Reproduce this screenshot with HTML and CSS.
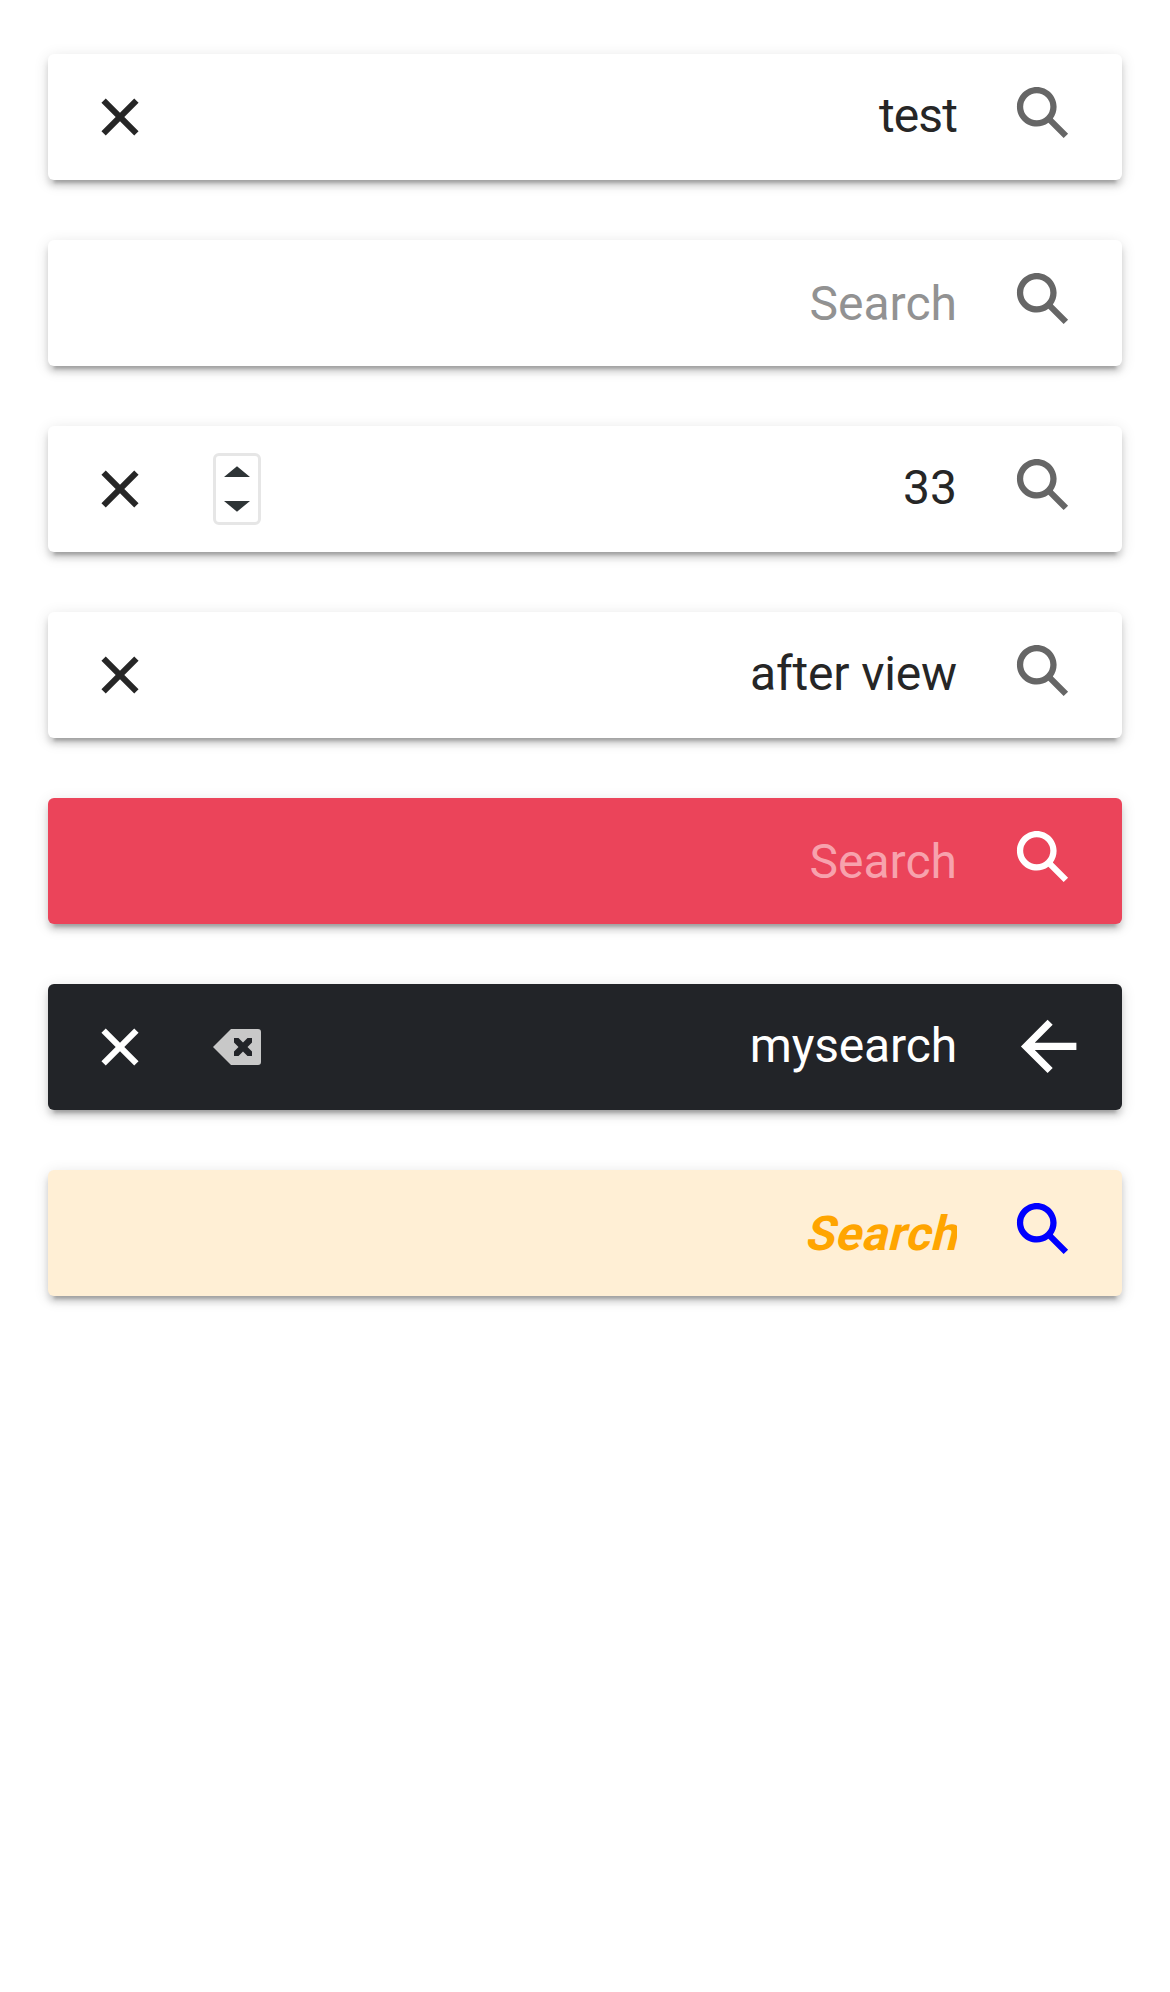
FILE: index.html
```html
<!DOCTYPE html>
<html lang="en">
<head>
<meta charset="utf-8">
<title>Searchbar</title>
<link rel="stylesheet" href="styles.css">
</head>
<body>
<svg class="defs" width="0" height="0">
  <symbol id="close" viewBox="0 0 512 512"><path d="M400 145.49 366.51 112 256 222.51 145.49 112 112 145.49 222.51 256 112 366.51 145.49 400 256 289.49 366.51 400 400 366.51 289.49 256z"/></symbol>
  <symbol id="search" viewBox="0 0 512 512"><path d="M464 428 339.92 303.9a160.48 160.48 0 0 0 30.72-94.58C370.64 120.37 298.27 48 209.32 48S48 120.37 48 209.32s72.37 161.32 161.32 161.32a160.48 160.48 0 0 0 94.58-30.72L428 464zM209.32 319.69a110.38 110.38 0 1 1 110.37-110.37 110.5 110.5 0 0 1-110.37 110.37z"/></symbol>
  <symbol id="back" viewBox="0 0 512 512"><path d="M244 400 100 256l144-144M120 256h292" fill="none" stroke="currentColor" stroke-width="48" stroke-linecap="square" stroke-miterlimit="10"/></symbol>
</svg>
<main class="list">
  <div class="bar">
    <svg class="close"><use href="#close"/></svg>
    <span class="text tight">test</span>
    <svg class="search"><use href="#search"/></svg>
  </div>
  <div class="bar">
    <span class="text placeholder">Search</span>
    <svg class="search"><use href="#search"/></svg>
  </div>
  <div class="bar">
    <svg class="close"><use href="#close"/></svg>
    <svg class="spinner" viewBox="0 0 48 72"><rect x="1.5" y="1.5" width="45" height="69" rx="4.5" fill="none" stroke="#e6e6e6" stroke-width="3"/><path d="M24 13.3 37 24H11zM24 58.7 37 48H11z" fill="#2e3436"/></svg>
    <span class="text">33</span>
    <svg class="search"><use href="#search"/></svg>
  </div>
  <div class="bar">
    <svg class="close"><use href="#close"/></svg>
    <span class="text snug">after view</span>
    <svg class="search"><use href="#search"/></svg>
  </div>
  <div class="bar danger">
    <span class="text placeholder">Search</span>
    <svg class="search"><use href="#search"/></svg>
  </div>
  <div class="bar dark">
    <svg class="close"><use href="#close"/></svg>
    <svg class="erase" viewBox="0 0 48 36"><path fill="#c8c8c8" fill-rule="evenodd" d="M18 0H45q3 0 3 3V33q0 3-3 3H18L0 18zM21 9v4.500l4.500 4.500l-4.500 4.500v4.500h4.500l4.500-4.500l4.500 4.500h4.500v-4.500l-4.500-4.500l4.500-4.500v-4.500h-4.500l-4.500 4.500l-4.500-4.500z"/></svg>
    <span class="text snug">mysearch</span>
    <svg class="back"><use href="#back"/></svg>
  </div>
  <div class="bar custom">
    <span class="text placeholder"><span class="slanted">Search</span></span>
    <svg class="search"><use href="#search"/></svg>
  </div>
</main>
</body>
</html>
```

FILE: styles.css
```css
body {
  margin: 0;
  background: #fff;
  font-family: Roboto, sans-serif;
}

.defs {
  display: none;
}

.list {
  display: flex;
  flex-direction: column;
  gap: 60px;
  padding: 54px 48px;
}

.bar {
  display: flex;
  align-items: flex-start;
  height: 126px;
  border-radius: 6px;
  background: #fff;
  color: #262626;
  box-shadow: 0 6px 6px 0 rgba(0, 0, 0, .14), 0 9px 3px -6px rgba(0, 0, 0, .2), 0 3px 15px 0 rgba(0, 0, 0, .12);
}

svg {
  flex: none;
  fill: currentColor;
}

.close {
  width: 66px;
  height: 66px;
  margin: 30px 0 0 39px;
}

.search {
  width: 63px;
  height: 63px;
  margin: 27px 48px 0 54px;
  color: #666;
}

.back {
  width: 76.8px;
  height: 76.8px;
  margin: 23.6px 34.2px 0 54px;
}

.spinner {
  width: 48px;
  height: 72px;
  margin: 27px 0 0 60px;
}

.erase {
  width: 48px;
  height: 36px;
  margin: 45px 0 0 60px;
}

.text {
  flex: 1;
  overflow: hidden;
  font-size: 48px;
  line-height: 123px;
  text-align: right;
  white-space: nowrap;
}

.tight {
  letter-spacing: -.9px;
}

.snug {
  letter-spacing: -.15px;
}

.placeholder {
  line-height: 127px;
  color: #929292;
}

.danger {
  background: #eb445a;
}

.danger .search {
  color: #fff;
}

.danger .placeholder {
  color: #f7a2ad;
}

.dark {
  background: #222428;
  color: #fff;
}

.custom {
  background: #ffefd5;
}

.custom .search {
  color: #00f;
}

.custom .placeholder {
  color: orange;
  font-weight: 700;
}

.slanted {
  display: inline-block;
  letter-spacing: .5px;
  transform: skewX(-14deg);
  transform-origin: 0 80px;
}
```
